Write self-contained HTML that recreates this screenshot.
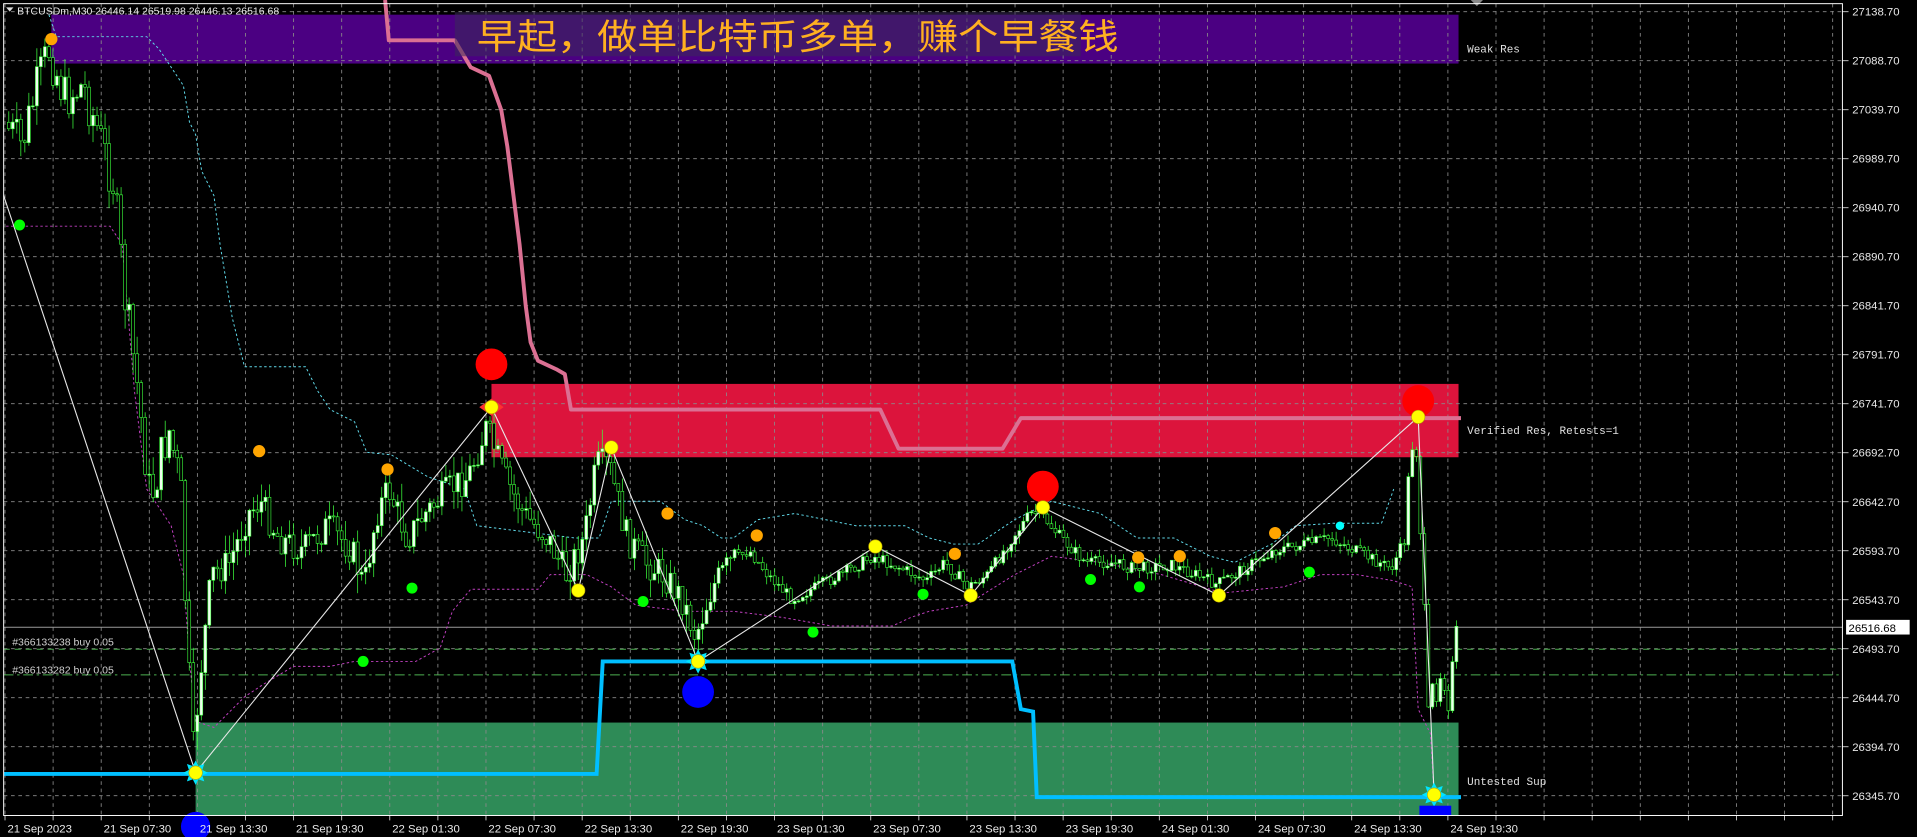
<!DOCTYPE html>
<html><head><meta charset="utf-8"><style>
html,body{margin:0;padding:0;background:#000;overflow:hidden}
svg{display:block}
</style></head><body>
<svg id="s" width="1917" height="837" viewBox="0 0 1568 684.6" preserveAspectRatio="none" xmlns="http://www.w3.org/2000/svg">
<rect x="0" y="0" width="1568" height="685" fill="#000"/>
<rect x="42" y="12" width="1151" height="40" fill="#4b0082"/>
<rect x="402" y="314" width="791" height="60" fill="#dc143c"/>
<rect x="160" y="591" width="1033" height="76" fill="#2e8b57"/>
<g id="grid"></g>
<line x1="3" y1="513" x2="1507" y2="513" stroke="#9a9a9a" stroke-width="0.8"/>
<line x1="3" y1="531" x2="1507" y2="531" stroke="#4caf50" stroke-width="0.8" stroke-dasharray="5,4"/>
<line x1="3" y1="552" x2="1507" y2="552" stroke="#4caf50" stroke-width="0.8" stroke-dasharray="8,3,2,3"/>
<polyline fill="none" stroke="#5fd8e8" stroke-width="0.8" stroke-dasharray="2,2" points="40,12 46,30 120,30 130,40 140,55 150,70 155,100 160,110 165,140 175,160 180,200 185,230 190,260 200,300 250,300 260,320 270,335 290,345 300,370 320,372 350,390 380,400 390,430 470,440 490,440 500,410 540,410 560,425 575,430 590,440 600,440 620,425 650,420 700,430 740,430 760,440 780,445 800,445 830,425 860,410 900,420 930,440 960,440 990,455 1010,460 1040,445 1060,430 1090,428 1130,428 1140,400"/>
<polyline fill="none" stroke="#c040c0" stroke-width="0.8" stroke-dasharray="2,2" points="5,185 90,185 100,200 105,260 110,320 120,400 140,430 150,470 155,540 160,590 175,595 200,570 215,560 240,545 270,545 290,541 340,541 360,530 370,500 385,482 440,482 450,470 480,470 500,480 520,495 560,500 600,500 640,505 680,512 730,512 745,505 760,500 790,495 830,470 860,455 900,460 950,470 1000,485 1050,480 1080,470 1110,470 1140,475 1155,480 1160,580 1170,600 1173,650"/>
<g id="candles"></g>
<polyline fill="none" stroke="#db7093" stroke-width="3.2" stroke-linejoin="round" points="315,0 318,33 372,33 385,55 400,62 410,90 415,120 420,160 425,200 430,250 434,280 440,295 455,302 462,306 467,335 720,335 735,367 820,367 835,342 1195,342"/>
<polyline fill="none" stroke="#00bfff" stroke-width="3.2" points="3,633 488,633 493,541 828,541 835,580 845,582 848,652 1195,652"/>
<polyline fill="none" stroke="#e8e8e8" stroke-width="0.9" points="3,160 160,632 402,333 473,483 500,366 571,541 716,447 794,487 853,415 997,487 1160,341 1173,650"/>
<g id="stars"></g>
<g fill="#ff0000"><circle cx="402" cy="298" r="13"/><circle cx="853" cy="398" r="13"/><circle cx="1160" cy="328" r="13"/></g>
<g fill="#0000ff"><circle cx="571" cy="566" r="13"/><circle cx="160" cy="676" r="12"/><rect x="1161" y="659" width="26" height="8"/></g>
<g fill="#ffff00" stroke="#b8a000" stroke-width="0.5"><circle cx="160" cy="632" r="5.5"/><circle cx="402" cy="333" r="5.5"/><circle cx="473" cy="483" r="5.5"/><circle cx="500" cy="366" r="5.5"/><circle cx="571" cy="541" r="5.5"/><circle cx="716" cy="447" r="5.5"/><circle cx="794" cy="487" r="5.5"/><circle cx="853" cy="415" r="5.5"/><circle cx="997" cy="487" r="5.5"/><circle cx="1160" cy="341" r="5.5"/><circle cx="1173" cy="650" r="5.5"/></g>
<g fill="#ffa500"><circle cx="42" cy="32" r="5"/><circle cx="212" cy="369" r="5"/><circle cx="317" cy="384" r="5"/><circle cx="546" cy="420" r="5"/><circle cx="619" cy="438" r="5"/><circle cx="781" cy="453" r="5"/><circle cx="931" cy="456" r="5"/><circle cx="965" cy="455" r="5"/><circle cx="1043" cy="436" r="5"/></g>
<g fill="#00ff00"><circle cx="16" cy="184" r="4.5"/><circle cx="297" cy="541" r="4.5"/><circle cx="337" cy="481" r="4.5"/><circle cx="526" cy="492" r="4.5"/><circle cx="665" cy="517" r="4.5"/><circle cx="755" cy="486" r="4.5"/><circle cx="892" cy="474" r="4.5"/><circle cx="932" cy="480" r="4.5"/><circle cx="1071" cy="468" r="4.5"/></g>
<circle cx="1096" cy="430" r="3.5" fill="#00ffff"/>
<rect x="372" y="10" width="512" height="36" fill="#3a2a5a" opacity="0.55"/>
<text x="390" y="40" fill="#ffb020" font-family="'Liberation Sans','Noto Sans CJK SC',sans-serif" font-size="29" textLength="525" lengthAdjust="spacingAndGlyphs">早起，做单比特币多单，赚个早餐钱</text>
<g font-family="'Liberation Mono',monospace" font-size="9" fill="#e0e0e0">
<text x="1200" y="43">Weak Res</text>
<text x="1200" y="355">Verified Res, Retests=1</text>
<text x="1200" y="642">Untested Sup</text>
</g>
<g font-family="'Liberation Sans',sans-serif" font-size="8.6" fill="#d0d0d0">
<text x="10" y="528">#366133238 buy 0.05</text>
<text x="10" y="551">#366133282 buy 0.05</text>
</g>
<path d="M5,6 L11,6 L8,9.5 Z" fill="#ddd"/>
<text x="14" y="12" font-family="'Liberation Sans',sans-serif" font-size="8.6" fill="#e8e8e8">BTCUSDm,M30  26446.14 26519.98 26446.13 26516.68</text>
<path d="M1203,0 L1213,0 L1208,5 Z" fill="#888"/>
<rect x="3" y="3" width="1504" height="664" fill="none" stroke="#fff" stroke-width="0.8"/>
<g id="axis" font-family="'Liberation Sans',sans-serif" font-size="9.3" fill="#e8e8e8"></g>
<rect x="1510" y="507" width="52" height="12" fill="#fff"/>
<text x="1512" y="517" font-family="'Liberation Sans',sans-serif" font-size="9.3" fill="#000">26516.68</text>
</svg>
<script>
(function(){
var NS="http://www.w3.org/2000/svg";
function el(p,t,a){var e=document.createElementNS(NS,t);for(var k in a)e.setAttribute(k,a[k]);p.appendChild(e);return e;}
var g=document.getElementById('grid'),ax=document.getElementById('axis');
var prices=["27138.70","27088.70","27039.70","26989.70","26940.70","26890.70","26841.70","26791.70","26741.70","26692.70","26642.70","26593.70","26543.70","26493.70","26444.70","26394.70","26345.70"];
for(var i=0;i<17;i++){var y=9.57+40.08*i;
el(g,'line',{x1:3,y1:y,x2:1507,y2:y,stroke:'#8a8a8a','stroke-width':0.7,'stroke-dasharray':'3,3'});
el(g,'line',{x1:1507,y1:y,x2:1512,y2:y,stroke:'#ddd','stroke-width':0.7});
var t=el(ax,'text',{x:1515,y:y+3.3});t.textContent=prices[i];}
var times=["21 Sep 2023","21 Sep 07:30","21 Sep 13:30","21 Sep 19:30","22 Sep 01:30","22 Sep 07:30","22 Sep 13:30","22 Sep 19:30","23 Sep 01:30","23 Sep 07:30","23 Sep 13:30","23 Sep 19:30","24 Sep 01:30","24 Sep 07:30","24 Sep 13:30","24 Sep 19:30"];
for(var k=0;k<39;k++){var x=4.1+39.34*k;if(x>1506)break;
el(g,'line',{x1:x,y1:3,x2:x,y2:667,stroke:'#8a8a8a','stroke-width':0.7,'stroke-dasharray':'3,3'});
el(g,'line',{x1:x,y1:667,x2:x,y2:671,stroke:'#ddd','stroke-width':0.7});
if(k%2==0&&k/2<16){var t2=el(ax,'text',{x:x+2,y:681});t2.textContent=times[k/2];}}
var pts=[[5,100],[20,120],[30,80],[42,40],[55,80],[70,70],[80,100],[95,150],[105,250],[115,320],[125,410],[140,350],[150,400],[155,520],[160,620],[165,560],[175,470],[190,460],[205,420],[215,410],[230,440],[250,450],[270,430],[290,450],[300,480],[310,420],[320,400],[335,440],[350,420],[370,400],[385,390],[400,350],[415,390],[430,420],[450,440],[465,470],[480,440],[490,380],[500,380],[515,440],[530,460],[545,470],[560,490],[571,520],[585,480],[600,460],[615,450],[630,470],[650,490],[670,480],[690,470],[716,455],[740,465],[760,475],[775,460],[794,480],[810,470],[830,440],[845,420],[853,420],[870,440],[890,460],[910,460],[930,465],[960,462],[980,470],[997,478],[1020,465],[1045,450],[1070,445],[1090,440],[1110,450],[1140,465],[1152,440],[1156,360],[1160,350],[1165,450],[1170,600],[1175,560],[1182,540],[1188,570],[1195,515]];
function py(x){if(x>=1195)return 515;for(var i=1;i<pts.length;i++){if(x<=pts[i][0]){var a=pts[i-1],b=pts[i];return a[1]+(b[1]-a[1])*(x-a[0])/(b[0]-a[0]);}}return 515;}
var seed=7;function r(){seed=(seed*9301+49297)%233280;return seed/233280;}
var c=document.getElementById('candles');var prev=py(5);
for(var x=6;x<1193;x+=3.28){var amp=(x<160||x>1150)?40:(x<600?26:10);
var cl=py(x+3.28)+(r()-0.5)*amp;var op=prev;
var wk=(x<600?16:7);
var hi=Math.min(op,cl)-r()*wk,lo=Math.max(op,cl)+r()*wk;
el(c,'line',{x1:x+1.2,y1:hi,x2:x+1.2,y2:lo,stroke:'#3cff3c','stroke-width':0.6});
var tp=Math.min(op,cl),h=Math.max(Math.abs(op-cl),0.8);
el(c,'rect',{x:x,y:tp,width:2.4,height:h,fill:cl<op?'#f0fff0':'#000',stroke:'#3cff3c','stroke-width':0.5});
prev=cl;}
var st=document.getElementById('stars');
[[160,632],[571,541],[1173,650]].forEach(function(p){var d='';for(var i=0;i<16;i++){var a=i*Math.PI/8,rr=i%2?6:10;d+=(i?'L':'M')+(p[0]+rr*Math.cos(a)).toFixed(1)+','+(p[1]+rr*Math.sin(a)).toFixed(1);}el(st,'path',{d:d+'Z',fill:'#00e5ff'});});
el(st,'path',{d:'M392,333 L402,326 L412,333 L402,340Z',fill:'#ff3030'});
})();
</script>
</body></html>
